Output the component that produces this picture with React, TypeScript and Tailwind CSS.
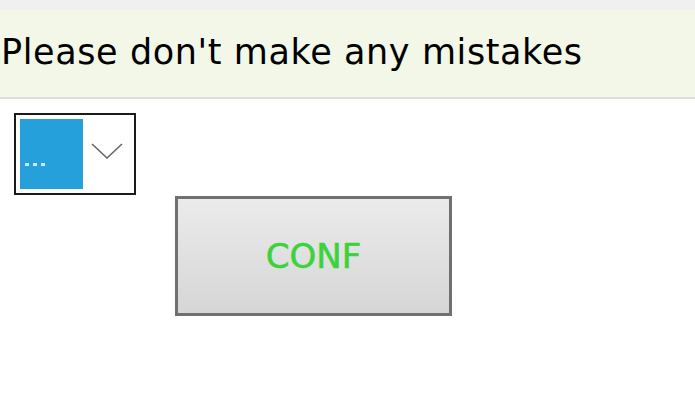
export default function App() {
  return (
    <div className="w-[695px] h-[404px] bg-white overflow-hidden" style={{ fontFamily: '"DejaVu Sans", Verdana, sans-serif' }}>
      <div className="h-[10px] bg-[#f0f0f0]" />
      <div className="h-[89px] bg-[#f3f7e8] border-b-2 border-[#dcdcdc] flex items-center">
        <span className="text-[35px] leading-none tracking-[0.6px] text-black pl-[1px] pb-[2px]">Please don't make any mistakes</span>
      </div>
      <div className="pl-[14px] pt-[14px]">
        <div className="w-[122px] h-[82px] border-2 border-[#1a1a1a] bg-white p-[4px] flex">
          <div className="w-[63px] h-full bg-[#26a0da] flex items-end gap-[4px] pl-[5px] pb-[23px]">
            <div className="w-[4px] h-[3px] bg-[#c8f0ff]" />
            <div className="w-[4px] h-[3px] bg-[#c8f0ff]" />
            <div className="w-[4px] h-[3px] bg-[#c8f0ff]" />
          </div>
          <div className="flex-1 flex items-center justify-center pb-[6px]">
            <svg width="32" height="18" viewBox="0 0 32 18" fill="none">
              <path d="M1 2 L16 16 L31 2" stroke="#666" strokeWidth="1.6" />
            </svg>
          </div>
        </div>
        <div className="ml-[161px] mt-[1px] w-[277px] h-[120px] border-[3px] border-[#707070] bg-gradient-to-b from-[#ebebeb] to-[#d6d6d6] flex items-center justify-center">
          <span className="text-[34px] leading-none text-[#3bd23b] [-webkit-text-stroke:0.6px_#3bd23b]">CONF</span>
        </div>
      </div>
    </div>
  );
}
